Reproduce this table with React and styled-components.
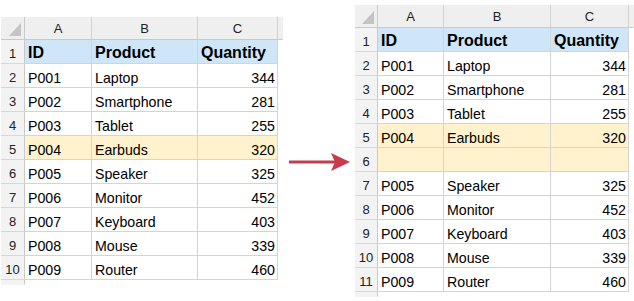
import styled, { createGlobalStyle } from "styled-components";

const GlobalStyle = createGlobalStyle`
  html, body {
    margin: 0;
    padding: 0;
    background: #ffffff;
  }
  body {
    font-family: "Liberation Sans", Arial, sans-serif;
    color: #000;
  }
`;

const before = [
  ["P001", "Laptop", 344],
  ["P002", "Smartphone", 281],
  ["P003", "Tablet", 255],
  ["P004", "Earbuds", 320, true],
  ["P005", "Speaker", 325],
  ["P006", "Monitor", 452],
  ["P007", "Keyboard", 403],
  ["P008", "Mouse", 339],
  ["P009", "Router", 460],
];

const after = [
  ["P001", "Laptop", 344],
  ["P002", "Smartphone", 281],
  ["P003", "Tablet", 255],
  ["P004", "Earbuds", 320, true],
  ["", "", "", true],
  ["P005", "Speaker", 325],
  ["P006", "Monitor", 452],
  ["P007", "Keyboard", 403],
  ["P008", "Mouse", 339],
  ["P009", "Router", 460],
];

const Page = styled.div`
  display: flex;
  align-items: flex-start;
  width: 634px;
  height: 301px;
`;

const Sheet = styled.div`
  display: grid;
  grid-template-columns: ${(p) => p.$cols};
  grid-template-rows: 23px repeat(${(p) => p.$rows}, 24px) 5px;
  margin-top: ${(p) => p.$top}px;
  margin-left: ${(p) => p.$left}px;
`;

const Corner = styled.div`
  position: relative;
  background: #efefef;
  border-right: 1px solid #c9c9c9;
  border-bottom: 1px solid #c9c9c9;

  &::after {
    content: "";
    position: absolute;
    right: 3px;
    bottom: 3px;
    width: 0;
    height: 0;
    border-left: 12px solid transparent;
    border-bottom: 13px solid #c4c4c4;
  }
`;

const ColHead = styled.div`
  display: flex;
  align-items: center;
  justify-content: center;
  padding-top: 1px;
  background: #efefef;
  border-right: 1px solid ${(p) => (p.$last ? "transparent" : "#d2d2d2")};
  border-bottom: 1px solid #c9c9c9;
  font-size: 13px;
  color: #222;
`;

const RowHead = styled.div`
  display: flex;
  align-items: center;
  justify-content: center;
  padding-top: 3px;
  background: #f3f3f3;
  border-right: 1px solid #c9c9c9;
  border-bottom: 1px solid ${(p) => (p.$stub ? "transparent" : "#d8d8d8")};
  font-size: 13px;
  color: #222;
`;

const Cell = styled.div`
  display: flex;
  align-items: center;
  justify-content: ${(p) => (p.$num ? "flex-end" : "flex-start")};
  padding: ${(p) => (p.$head ? "3px" : "4px")} ${(p) => (p.$num ? "2px" : "0")} 0 ${(p) => (p.$num ? "0" : "3px")};
  background: ${(p) => (p.$head ? "#cfe6f8" : p.$hl ? "#fff2cc" : "#ffffff")};
  border-right: 1px solid #d4d4d4;
  border-bottom: 1px solid #d4d4d4;
  font-size: ${(p) => (p.$head ? "16px" : "14.2px")};
  font-weight: ${(p) => (p.$head ? 700 : 400)};
  white-space: nowrap;
  overflow: hidden;
`;

const Blank = styled.div``;

const ArrowBox = styled.div`
  flex: 1;
  display: flex;
  justify-content: center;
  margin-top: 152px;
  padding-left: 2px;
`;

function Table({ rows, cols, top, left }) {
  return (
    <Sheet $cols={cols} $rows={rows.length + 1} $top={top} $left={left}>
      <Corner />
      <ColHead>A</ColHead>
      <ColHead>B</ColHead>
      <ColHead>C</ColHead>
      <ColHead $last />

      <RowHead>1</RowHead>
      <Cell $head>ID</Cell>
      <Cell $head>Product</Cell>
      <Cell $head>Quantity</Cell>
      <Blank />

      {rows.map(([id, product, qty, hl], i) => [
        <RowHead key={`r${i}`}>{i + 2}</RowHead>,
        <Cell key={`a${i}`} $hl={hl}>{id}</Cell>,
        <Cell key={`b${i}`} $hl={hl}>{product}</Cell>,
        <Cell key={`c${i}`} $hl={hl} $num>{qty}</Cell>,
        <Blank key={`x${i}`} />,
      ])}

      <RowHead $stub />
    </Sheet>
  );
}

function Arrow() {
  return (
    <svg width="62" height="20" viewBox="0 0 62 20">
      <line x1="0" y1="10" x2="46" y2="10" stroke="#c63c4e" strokeWidth="3" />
      <path d="M42 1 L61 10 L42 19 L46 10 Z" fill="#c63c4e" />
    </svg>
  );
}

export default function App() {
  return (
    <>
      <GlobalStyle />
      <Page>
        <Table rows={before} cols="24px 67px 106px 80px 5px" top={17} left={1} />
        <ArrowBox>
          <Arrow />
        </ArrowBox>
        <Table rows={after} cols="23px 66px 107px 78px 5px" top={5} left={0} />
      </Page>
    </>
  );
}
